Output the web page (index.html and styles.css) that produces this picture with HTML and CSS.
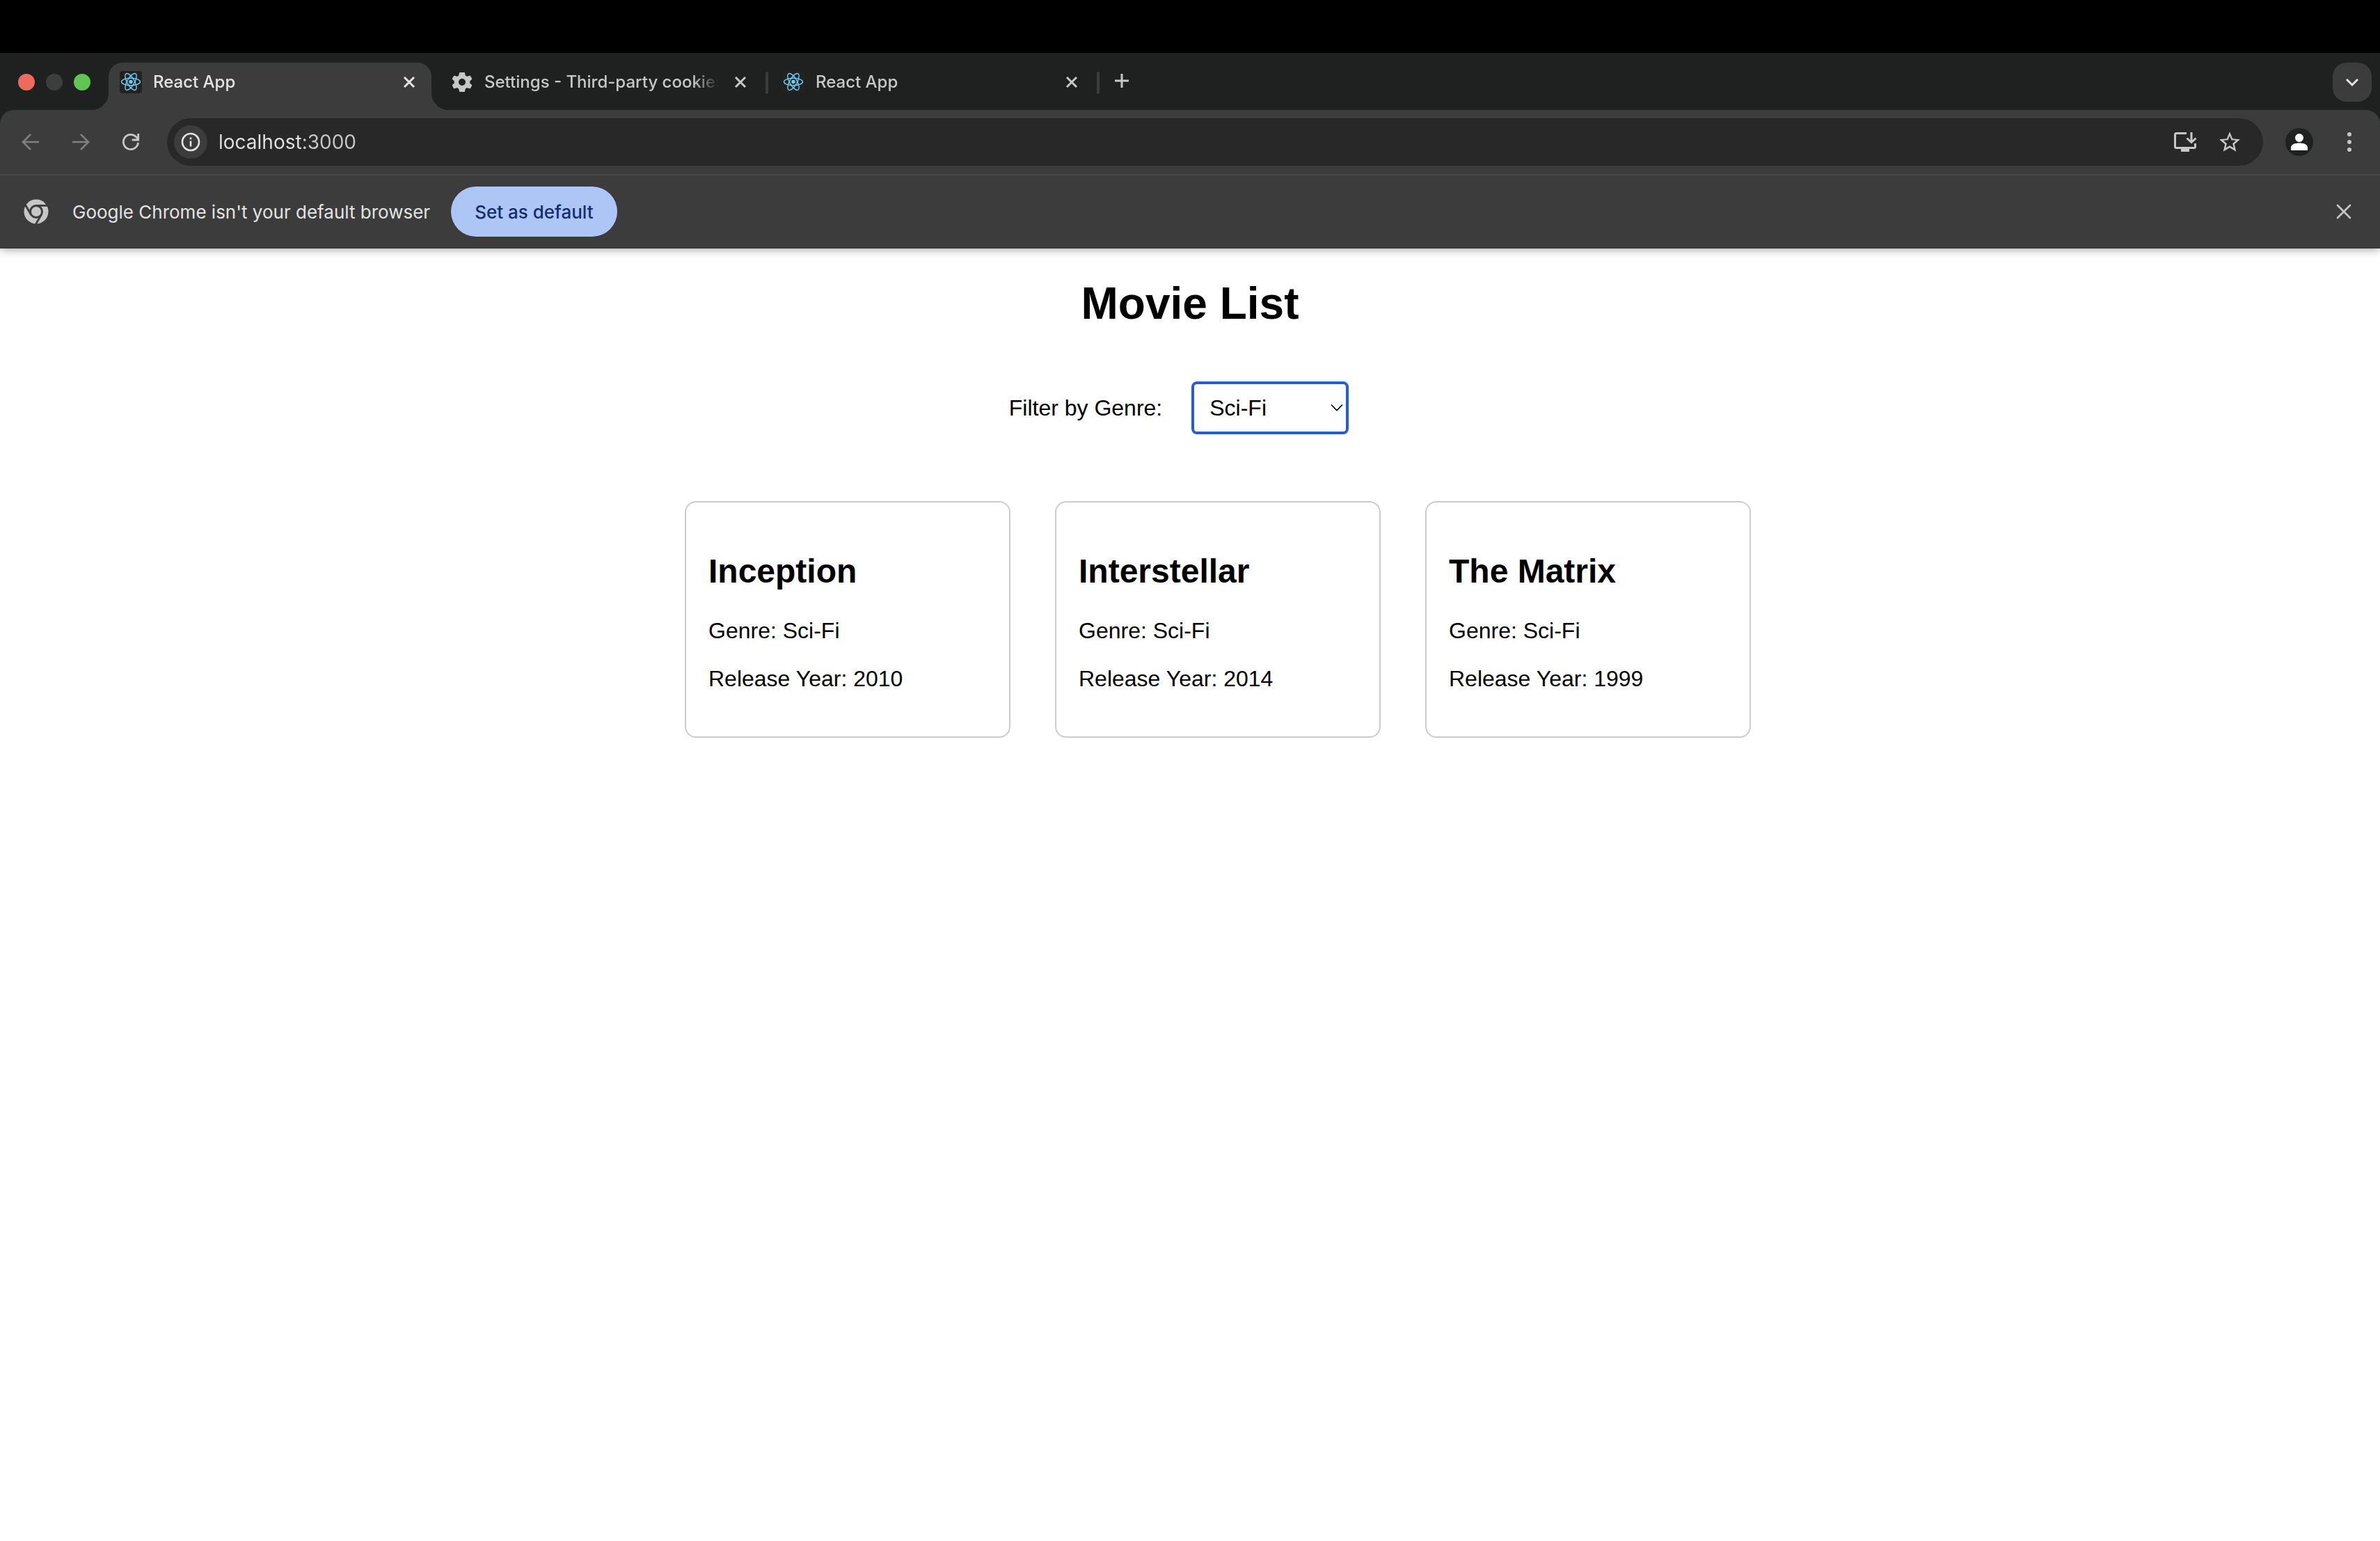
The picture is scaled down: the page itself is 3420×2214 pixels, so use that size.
FILE: index.html
```html
<!DOCTYPE html>
<html lang="en">
<head>
<meta charset="utf-8">
<title>React App</title>
<link rel="stylesheet" href="styles.css">
</head>
<body>
<svg class="sprite" aria-hidden="true">
  <symbol id="react" viewBox="0 0 32 32">
    <rect width="32" height="32" rx="4" fill="#222"/>
    <g fill="none" stroke="#74cdf4" stroke-width="1.400">
      <ellipse cx="16" cy="15.500" rx="13.500" ry="5.200"/>
      <ellipse cx="16" cy="15.500" rx="13.500" ry="5.200" transform="rotate(60 16 15.500)"/>
      <ellipse cx="16" cy="15.500" rx="13.500" ry="5.200" transform="rotate(120 16 15.500)"/>
    </g>
    <circle cx="16" cy="15.500" r="2.700" fill="#74cdf4"/>
  </symbol>
  <symbol id="close" viewBox="0 0 32 32">
    <path d="M9 9l14 14M23 9L9 23" fill="none" stroke="currentColor" stroke-width="3"/>
  </symbol>
</svg>

<header class="browser">
  <div class="strip">
    <div class="lights"><span class="light red"></span><span class="light gray"></span><span class="light green"></span></div>
    <div class="tab active">
      <svg class="favicon"><use href="#react"/></svg>
      <span class="tab-title">React App</span>
      <button class="tab-close" aria-label="Close tab"><svg class="favicon"><use href="#close"/></svg></button>
    </div>
    <span class="gap"></span>
    <div class="tab">
      <svg class="favicon" viewBox="0 0 32 32"><path fill="currentColor" stroke="currentColor" stroke-width="2" stroke-linejoin="round" d="M13 3h6l1 4.200 3 1.800 4.200-1.300 2 3.600-3 3v3.400l3 3-2 3.600-4.200-1.300-3 1.800-1 4.200h-6l-1-4.200-3-1.800-4.200 1.300-2-3.600 3-3v-3.400l-3-3 2-3.600L9 9l3-1.800z"/><circle cx="16" cy="16" r="5" fill="#1f2120"/></svg>
      <span class="tab-title">Settings - Third-party cookies</span>
      <button class="tab-close" aria-label="Close tab"><svg class="favicon"><use href="#close"/></svg></button>
    </div>
    <span class="gap line"></span>
    <div class="tab">
      <svg class="favicon"><use href="#react"/></svg>
      <span class="tab-title">React App</span>
      <button class="tab-close" aria-label="Close tab"><svg class="favicon"><use href="#close"/></svg></button>
    </div>
    <span class="gap line"></span>
    <button class="new-tab" aria-label="New tab"><svg width="40" height="40" viewBox="0 0 40 40"><path d="M20 8v20M10 18h20" fill="none" stroke="currentColor" stroke-width="3"/></svg></button>
    <button class="tab-search" aria-label="Search tabs"><svg width="32" height="32" viewBox="0 0 32 32"><path d="M8 12l8 8 8-8" fill="none" stroke="currentColor" stroke-width="3"/></svg></button>
  </div>

  <div class="toolbar">
    <div class="nav">
      <button class="icon dim" aria-label="Back"><svg width="32" height="32" viewBox="0 0 32 32"><path d="M28 16H6M16 5L5 16l11 11" fill="none" stroke="currentColor" stroke-width="2.600"/></svg></button>
      <button class="icon dim" aria-label="Forward"><svg width="32" height="32" viewBox="0 0 32 32"><path d="M4 16h22M16 5l11 11-11 11" fill="none" stroke="currentColor" stroke-width="2.600"/></svg></button>
      <button class="icon" aria-label="Reload"><svg width="32" height="32" viewBox="0 0 32 32"><path d="M26.500 17A10.600 10.600 0 1 1 23.500 8.500L26 11M26.700 4v9h-9" fill="none" stroke="currentColor" stroke-width="2.800"/></svg></button>
    </div>
    <div class="omnibox">
      <button class="site-info" aria-label="View site information"><svg width="28" height="28" viewBox="0 0 28 28"><circle cx="14" cy="14" r="12" fill="none" stroke="currentColor" stroke-width="2.600"/><path d="M14 12.500v8M14 7.500v2.800" stroke="currentColor" stroke-width="2.600"/></svg></button>
      <input class="url" type="text" value="localhost:3000" aria-label="Address">
      <button class="icon" aria-label="Install app"><svg width="40" height="40" viewBox="0 0 40 40"><path d="M22 7.500H7.500Q5.500 7.500 5.500 9.500V26.500Q5.500 28.500 7.500 28.500H32.500Q34.500 28.500 34.500 26.500V22" fill="none" stroke="currentColor" stroke-width="3"/><path d="M14 28h12v6H14z" fill="currentColor"/><path d="M29 6v14M22.500 14.500l6.500 6 6.500-6" fill="none" stroke="currentColor" stroke-width="3"/></svg></button>
      <button class="icon" aria-label="Bookmark this tab"><svg width="40" height="40" viewBox="0 0 24 24"><path fill="currentColor" d="M21 9.740l-6.470-.56L12 3.220 9.470 9.190 3 9.740l4.910 4.250L6.440 20.300 12 16.950l5.560 3.350-1.470-6.310zM12 15.100l-3.380 2.040.9-3.850-2.990-2.590 3.940-.34L12 6.730l1.540 3.640 3.940.34-2.990 2.590.9 3.850z"/></svg></button>
    </div>
    <button class="avatar" aria-label="Profile"><svg width="40" height="40" viewBox="0 0 40 40"><circle cx="20" cy="14" r="6" fill="#fff"/><path d="M8 32v-4c0-4.500 6-6.500 12-6.500s12 2 12 6.500v4z" fill="#fff"/></svg></button>
    <button class="icon" aria-label="Menu"><svg width="32" height="32" viewBox="0 0 32 32" fill="currentColor"><circle cx="16" cy="5" r="3"/><circle cx="16" cy="16" r="3"/><circle cx="16" cy="27" r="3"/></svg></button>
  </div>

  <div class="infobar">
    <svg class="chrome-logo" width="36" height="36" viewBox="0 0 36 36"><circle cx="18" cy="18" r="17.500" fill="#c7c7c7"/><circle cx="18" cy="18" r="10" fill="#3c3c3c"/><path d="M18 9.300H34M10.500 22.300L2.500 8.500M25.500 22.300L17.500 36" stroke="#3c3c3c" stroke-width="2.800"/><circle cx="18" cy="18" r="7" fill="#c7c7c7"/></svg>
    <span class="message">Google Chrome isn't your default browser</span>
    <button class="default-button">Set as default</button>
    <button class="icon dismiss" aria-label="Dismiss"><svg width="32" height="32" viewBox="0 0 32 32"><path d="M7 7l18 18M25 7L7 25" fill="none" stroke="currentColor" stroke-width="2.600" stroke-linecap="round"/></svg></button>
  </div>
</header>

<main class="page">
  <h1 class="heading">Movie List</h1>
  <div class="filter">
    <label for="genre">Filter by Genre:</label>
    <div class="select-box">
      <select id="genre" class="genre">
        <option>All</option>
        <option>Action</option>
        <option selected>Sci-Fi</option>
      </select>
      <svg class="chevron" width="18" height="12" viewBox="0 0 18 12"><path d="M1 1.500l8 8 8-8" fill="none" stroke="#000" stroke-width="1.600"/></svg>
    </div>
  </div>
  <ul class="movies">
    <li class="card"><h2 class="title">Inception</h2><p class="fact">Genre: Sci-Fi</p><p class="fact">Release Year: 2010</p></li>
    <li class="card"><h2 class="title">Interstellar</h2><p class="fact">Genre: Sci-Fi</p><p class="fact">Release Year: 2014</p></li>
    <li class="card"><h2 class="title">The Matrix</h2><p class="fact">Genre: Sci-Fi</p><p class="fact">Release Year: 1999</p></li>
  </ul>
</main>
</body>
</html>
```

FILE: styles.css
```css
* {
  box-sizing: border-box;
}

body {
  margin: 0;
  background: #fff;
  color: #000;
  font-family: "Liberation Sans", Arial, sans-serif;
  font-size: 32px;
  line-height: 37px;
}

button {
  display: flex;
  align-items: center;
  justify-content: center;
  flex: none;
  padding: 0;
  border: 0;
  background: none;
  color: inherit;
  font: inherit;
}

svg {
  display: block;
  flex: none;
}

.sprite {
  position: absolute;
  width: 0;
  height: 0;
}

/* Browser frame */
.browser {
  border-top: 76px solid #000;
  background: #1f2120;
  color: #c7c7c7;
  font-family: Inter, sans-serif;
  font-weight: 500;
  box-shadow: 0 0 14px rgba(0, 0, 0, 0.45);
}

.strip {
  display: flex;
  padding: 14px 12px 0 26px;
}

.lights {
  display: flex;
  align-items: center;
  gap: 16px;
  height: 56px;
  margin-right: 26px;
}

.light {
  width: 24px;
  height: 24px;
  border-radius: 50%;
}

.red {
  background: #ed6a5e;
}

.gray {
  background: #3d3d3d;
}

.green {
  background: #61c554;
}

.tab {
  position: relative;
  display: flex;
  align-items: center;
  gap: 16px;
  width: 464px;
  height: 68px;
  padding: 0 16px 12px;
  font-size: 24px;
  line-height: 32px;
}

.active {
  border-radius: 20px 20px 0 0;
  background: #3c3c3c;
  color: #e3e3e3;
}

.active::before,
.active::after {
  content: "";
  position: absolute;
  bottom: 0;
  width: 24px;
  height: 24px;
}

.active::before {
  right: 100%;
  background: radial-gradient(circle at 0 0, transparent 24px, #3c3c3c 24px);
}

.active::after {
  left: 100%;
  background: radial-gradient(circle at 100% 0, transparent 24px, #3c3c3c 24px);
}

.favicon {
  width: 32px;
  height: 32px;
}

.tab-title {
  flex: 1;
  overflow: hidden;
  white-space: nowrap;
  mask-image: linear-gradient(to left, transparent, #000 36px);
}

.gap {
  width: 12px;
  padding: 13px 4px;
}

.line::before {
  content: "";
  display: block;
  height: 32px;
  border-radius: 2px;
  background: #3c3c3c;
}

.new-tab {
  height: 56px;
  margin-left: 8px;
}

.tab-search {
  width: 56px;
  height: 56px;
  margin-left: auto;
  border-radius: 20px;
  background: #3c3c3c;
  color: #e3e3e3;
}

.toolbar {
  display: flex;
  align-items: center;
  padding: 12px 28px;
  border-radius: 20px 20px 0 0;
  background: #3c3c3c;
}

.nav {
  display: flex;
  gap: 40px;
  margin-right: 36px;
}

.dim {
  color: #7f7f7f;
}

.omnibox {
  display: flex;
  flex: 1;
  align-items: center;
  gap: 24px;
  height: 68px;
  margin-right: 32px;
  padding: 0 28px 0 10px;
  border-radius: 34px;
  background: #282828;
}

.site-info {
  width: 48px;
  height: 48px;
  border-radius: 50%;
  background: #3c3c3c;
  color: #e3e3e3;
}

.url {
  flex: 1;
  min-width: 0;
  height: 40px;
  margin-left: -8px;
  padding: 0;
  border: 0;
  outline: 0;
  background: linear-gradient(to right, #e3e3e3 120px, #c7c7c7 120px);
  background-clip: text;
  color: transparent;
  font: inherit;
  font-size: 28px;
  font-weight: 400;
}

.avatar {
  margin-right: 36px;
  border-radius: 50%;
  background: #1f2120;
}

.infobar {
  display: flex;
  align-items: center;
  padding: 16px 36px 16px 34px;
  border-top: 2px solid #474747;
  border-bottom: 1px solid #333;
  background: #3c3c3c;
  color: #e3e3e3;
  font-size: 26px;
}

.message {
  margin: 0 30px 0 34px;
  font-weight: 400;
}

.default-button {
  height: 72px;
  padding: 0 34px;
  border-radius: 36px;
  background: #aec6f6;
  color: #122e6e;
}

.dismiss {
  margin-left: auto;
  color: #c7c7c7;
}

/* Movie page */
.heading {
  margin: 42px 0 75px;
  font-size: 64px;
  line-height: 74px;
  text-align: center;
}

.filter {
  display: flex;
  align-items: center;
  justify-content: center;
  gap: 42px;
  padding-right: 32px;
}

.select-box {
  position: relative;
}

.genre {
  display: block;
  width: 226px;
  height: 76px;
  padding: 0 22px;
  border: 4px solid #265ecb;
  border-radius: 8px;
  appearance: none;
  background: #fff;
  color: #000;
  font: inherit;
}

.chevron {
  position: absolute;
  top: 32px;
  right: 8px;
  pointer-events: none;
}

.movies {
  display: flex;
  flex-wrap: wrap;
  justify-content: center;
  gap: 64px;
  margin: 96px 0 0;
  padding: 0 0 0 80px;
  list-style: none;
}

.card {
  width: 468px;
  padding: 32px;
  border: 2px solid #ccc;
  border-radius: 16px;
}

.title {
  margin: 40px 0;
  font-size: 48px;
  line-height: 54px;
}

.fact {
  margin: 0 0 32px;
}
```
